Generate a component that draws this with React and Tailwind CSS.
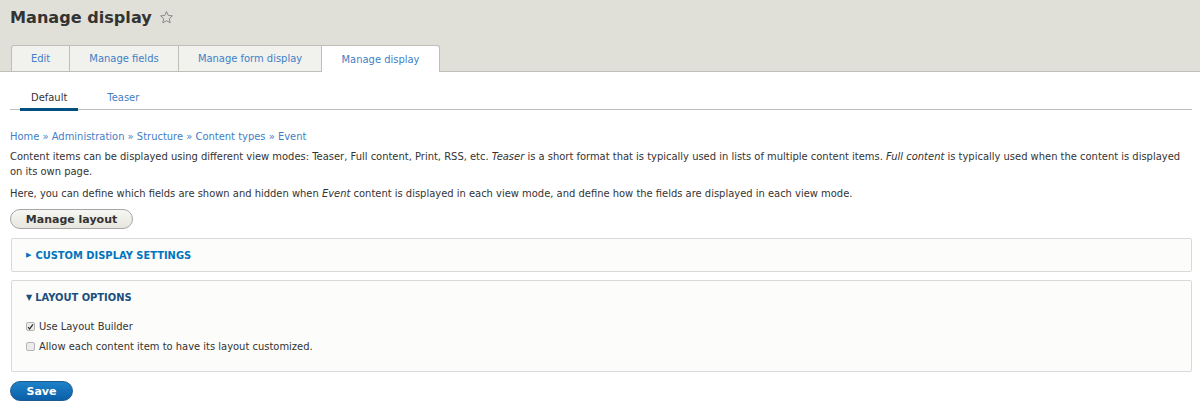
import React from "react";

const F = { fontFamily: '"DejaVu Sans", Verdana, sans-serif' };

export default function App() {
  return (
    <div className="min-h-[411px] bg-white text-[#333] text-[9.95px] leading-[15px]" style={F}>
      <div className="bg-[#e0e0d8] border-b border-[#bfbfba] px-[10px] pt-[6px]">
        <div className="flex items-center h-[24px]">
          <h1 className="text-[16.1px] font-bold text-[#333] leading-[24px]">Manage display</h1>
          <svg className="ml-[7px] mt-[-2px]" width="15" height="15" viewBox="0 0 24 24" fill="none" stroke="#8a8a86" strokeWidth="1.6" strokeLinejoin="round">
            <path d="M12 2.5l2.9 6.2 6.6.7-5 4.5 1.4 6.6L12 17.2l-5.9 3.3 1.4-6.6-5-4.5 6.6-.7z" />
          </svg>
        </div>
        <div className="flex mt-[15px] pl-[1px] mb-[-1px]">
          <div className="h-[26px] w-[59px] flex items-center justify-center bg-[#f1f1ee] border border-[#bfbfba] border-b-0 rounded-tl-[3px] text-[#3f80c6]">Edit</div>
          <div className="h-[26px] w-[109px] flex items-center justify-center bg-[#f1f1ee] border border-l-0 border-[#bfbfba] border-b-0 text-[#3f80c6]">Manage fields</div>
          <div className="h-[26px] w-[143px] flex items-center justify-center bg-[#f1f1ee] border border-l-0 border-[#bfbfba] border-b-0 text-[#3f80c6]">Manage form display</div>
          <div className="h-[27px] w-[118px] flex items-center justify-center bg-white border border-l-0 border-[#bfbfba] border-b-0 rounded-tr-[3px] text-[#3f80c6] relative z-10">Manage display</div>
        </div>
      </div>

      <div className="px-[10px] pr-[8px]">
        <div className="flex border-b border-[#bfbfba] mt-[12px] h-[26px] items-stretch">
          <div className="relative px-[11px] flex items-center text-[#333] ml-[10px] mr-[10px] pt-[2px]">
            Default
            <div className="absolute left-0 right-0 bottom-[-2px] h-[3px] bg-[#004f80]"></div>
          </div>
          <div className="px-[11px] flex items-center text-[#3f80c6] ml-[8px] pt-[2px]">Teaser</div>
        </div>

        <div className="mt-[19px] text-[#3f80c6]">Home » Administration » Structure » Content types » Event</div>
        <p className="mt-[5px] mr-[6px]">
          Content items can be displayed using different view modes: Teaser, Full content, Print, RSS, etc. <em>Teaser</em> is a short format that is typically used in lists of multiple content items. <em>Full content</em> is typically used when the content is displayed on its own page.
        </p>
        <p className="mt-[7px]">
          Here, you can define which fields are shown and hidden when <em>Event</em> content is displayed in each view mode, and define how the fields are displayed in each view mode.
        </p>

        <button className="mt-[8px] h-[20px] w-[123px] rounded-full border border-[#a6a6a6] bg-gradient-to-b from-[#f6f6f3] to-[#e7e7df] text-[11px] font-bold text-[#333] flex items-center justify-center" style={F}>
          Manage layout
        </button>

        <div className="mt-[9px] ml-[1px] h-[34px] border border-[#d9d9d9] rounded-[2px] bg-[#fcfcfa] flex items-center pl-[14px]">
          <span className="text-[#0074bd] text-[7px] mr-[4px]">▶</span>
          <span className="text-[#0074bd] font-bold uppercase text-[9.92px]">Custom display settings</span>
        </div>

        <div className="mt-[8px] ml-[1px] h-[92px] border border-[#d9d9d9] rounded-[2px] bg-[#fcfcfa] pl-[14px]">
          <div className="flex items-center h-[32px]">
            <span className="text-[#1b4f7e] text-[8px] mr-[3px]">▼</span>
            <span className="text-[#1b4f7e] font-bold uppercase text-[9.92px]">Layout options</span>
          </div>
          <div className="mt-[6px] flex items-center h-[15px]">
            <span className="w-[9px] h-[9px] border border-[#b3b3b3] rounded-[2px] bg-[#ececec] flex items-center justify-center mr-[4px]">
              <svg width="8" height="8" viewBox="0 0 8 8"><path d="M1.2 4.2l1.8 2L6.8 1" fill="none" stroke="#333" strokeWidth="1.4" /></svg>
            </span>
            Use Layout Builder
          </div>
          <div className="mt-[5px] flex items-center h-[15px]">
            <span className="w-[9px] h-[9px] border border-[#b3b3b3] rounded-[2px] bg-[#ececec] mr-[4px]"></span>
            Allow each content item to have its layout customized.
          </div>
        </div>

        <button className="mt-[9px] h-[20px] w-[63px] rounded-full bg-gradient-to-b from-[#1e82c8] to-[#0a5fa8] border border-[#1e5c90] text-white font-bold text-[11px] flex items-center justify-center" style={F}>
          Save
        </button>
      </div>
    </div>
  );
}
